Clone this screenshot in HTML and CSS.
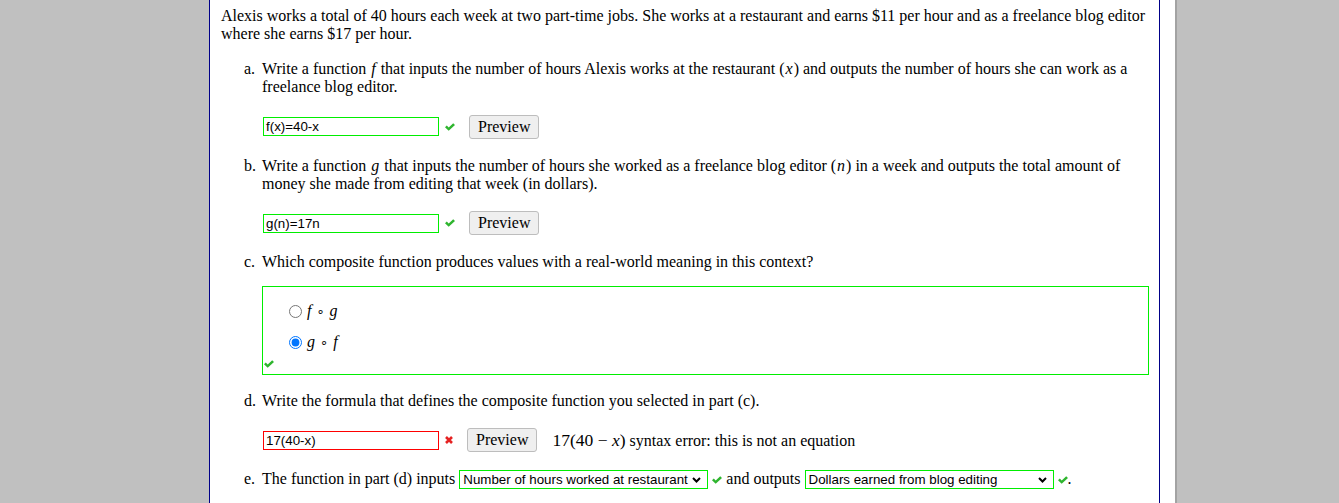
FILE: index.html
```html
<!DOCTYPE html>
<html lang="en">
<head>
<meta charset="utf-8">
<title>Composite functions</title>
<link rel="stylesheet" href="styles.css">
</head>
<body>
<div class="page">
  <div class="content">
    <p class="intro">Alexis works a total of 40 hours each week at two part-time jobs. She works at a restaurant and earns $11 per hour and as a freelance blog editor where she earns $17 per hour.</p>

    <div class="item">
      <span class="label">a.</span>
      <div class="body">
        <p class="prompt">Write a function <i class="mv">f</i> that inputs the number of hours Alexis works at the restaurant (<i class="mv">x</i>) and outputs the number of hours she can work as a freelance blog editor.</p>
        <div class="answer">
          <span class="field ok">f(x)=40-x</span>
          <svg class="icon check" width="10" height="8" viewBox="0 0 10 8"><path d="M0 4.3 L1.8 2.6 L3.7 4.4 L8.2 0.2 L10 1.9 L3.7 7.8 Z" fill="#2fb52f"/></svg>
          <button class="preview" type="button">Preview</button>
        </div>
      </div>
    </div>

    <div class="item">
      <span class="label">b.</span>
      <div class="body">
        <p class="prompt">Write a function <i class="mv">g</i> that inputs the number of hours she worked as a freelance blog editor (<i class="mv">n</i>) in a week and outputs the total amount of money she made from editing that week (in dollars).</p>
        <div class="answer">
          <span class="field ok">g(n)=17n</span>
          <svg class="icon check" width="10" height="8" viewBox="0 0 10 8"><path d="M0 4.3 L1.8 2.6 L3.7 4.4 L8.2 0.2 L10 1.9 L3.7 7.8 Z" fill="#2fb52f"/></svg>
          <button class="preview" type="button">Preview</button>
        </div>
      </div>
    </div>

    <div class="item item-c">
      <span class="label">c.</span>
      <div class="body">
        <p class="prompt">Which composite function produces values with a real-world meaning in this context?</p>
        <div class="choices">
          <label class="choice"><input type="radio" name="comp"><span class="opt"><i class="mv">f</i> <span class="ring">∘</span> <i class="mv">g</i></span></label>
          <label class="choice"><input type="radio" name="comp" checked><span class="opt"><i class="mv">g</i> <span class="ring">∘</span> <i class="mv">f</i></span></label>
          <svg class="icon check boxcheck" width="10" height="8" viewBox="0 0 10 8"><path d="M0 4.3 L1.8 2.6 L3.7 4.4 L8.2 0.2 L10 1.9 L3.7 7.8 Z" fill="#2fb52f"/></svg>
        </div>
      </div>
    </div>

    <div class="item">
      <span class="label">d.</span>
      <div class="body">
        <p class="prompt">Write the formula that defines the composite function you selected in part (c).</p>
        <div class="answer">
          <span class="field bad">17(40-x)</span>
          <svg class="icon cross" width="8" height="8" viewBox="0 0 8 8"><path d="M1 1 L7 7 M7 1 L1 7" fill="none" stroke="#e52222" stroke-width="2.6"/></svg>
          <button class="preview" type="button">Preview</button>
          <span class="feedback"><span class="math">17(40 − <i>x</i>)</span> syntax error: this is not an equation</span>
        </div>
      </div>
    </div>

    <div class="item last">
      <span class="label">e.</span>
      <div class="body">
        <p class="prompt">The function in part (d) inputs <span class="select"><span>Number of hours worked at restaurant</span><svg width="9" height="6" viewBox="0 0 9 6"><path d="M1 1 L4.5 4.5 L8 1" fill="none" stroke="#000" stroke-width="2"/></svg></span> <svg class="icon check inl" width="10" height="8" viewBox="0 0 10 8"><path d="M0 4.3 L1.8 2.6 L3.7 4.4 L8.2 0.2 L10 1.9 L3.7 7.8 Z" fill="#2fb52f"/></svg> and outputs <span class="select"><span>Dollars earned from blog editing</span><svg width="9" height="6" viewBox="0 0 9 6"><path d="M1 1 L4.5 4.5 L8 1" fill="none" stroke="#000" stroke-width="2"/></svg></span> <svg class="icon check inl" width="10" height="8" viewBox="0 0 10 8"><path d="M0 4.3 L1.8 2.6 L3.7 4.4 L8.2 0.2 L10 1.9 L3.7 7.8 Z" fill="#2fb52f"/></svg>.</p>
      </div>
    </div>
  </div>
</div>
</body>
</html>
```

FILE: styles.css
```css
html, body {
  margin: 0;
  padding: 0;
}
body {
  background: #c0c0c0;
  font-family: "Liberation Serif", "Times New Roman", serif;
  font-size: 16px;
  line-height: 18.4px;
  color: #000;
}
.page {
  margin-left: 209px;
  width: 966px;
  min-height: 503px;
  background: #fff;
  border-right: 2px solid #a3a3a3;
  display: flex;
}
.content {
  box-sizing: border-box;
  width: 951px;
  border-left: 1px solid #000088;
  border-right: 1px solid #000088;
  padding: 7px 10px 0 11px;
}
.intro {
  margin: 0 0 16px 0;
}
.item {
  display: grid;
  grid-template-columns: 18px 1fr;
  margin-left: 23px;
  margin-bottom: 18px;
}
.item-c {
  margin-bottom: 17px;
}
.label {
  display: block;
}
.body {
  min-width: 0;
}
.prompt {
  margin: 0;
}
.mv {
  font-family: "Liberation Serif", "Times New Roman", serif;
  font-style: italic;
  padding: 0 1px;
}
.answer {
  display: flex;
  align-items: center;
  height: 24px;
  margin-top: 18px;
}
.field {
  box-sizing: border-box;
  width: 176px;
  height: 19px;
  border: 1px solid #00ee00;
  padding: 0 2px;
  font-family: "Liberation Sans", Arial, sans-serif;
  font-size: 13.33px;
  line-height: 17px;
  background: #fff;
  margin-left: 1px;
}
.field.bad {
  border-color: #ff0000;
}
.icon {
  display: block;
  flex: none;
}
.answer .icon {
  margin-left: 6px;
}
.preview {
  box-sizing: border-box;
  height: 24px;
  margin-left: 14px;
  padding: 0 8px;
  background: #efefef;
  border: 1px solid #bdbdbd;
  border-radius: 3px;
  font-family: "Liberation Serif", "Times New Roman", serif;
  font-size: 16px;
  color: #000;
}
.feedback {
  margin-left: 15px;
}
.math {
  font-family: "Liberation Serif", "Times New Roman", serif;
  font-size: 17.5px;
}
.choices {
  margin-top: 14px;
  border: 1px solid #00ee00;
  padding: 15px 0 5px 26px;
  display: flex;
  flex-direction: column;
  align-items: flex-start;
}
.choice {
  display: flex;
  align-items: center;
  height: 20px;
}
.choice + .choice {
  margin-top: 11px;
}
.choice input {
  margin: 0 4px 0 0;
  width: 13px;
  height: 13px;
}
.opt .ring {
  font-family: "DejaVu Sans", sans-serif;
  font-size: 13px;
}
.boxcheck {
  margin: 6px 0 0 -25px;
  height: 10px;
}
.select {
  box-sizing: border-box;
  display: inline-flex;
  align-items: center;
  justify-content: space-between;
  width: 249px;
  height: 19px;
  border: 1px solid #00ee00;
  padding: 0 6px 0 3px;
  font-family: "Liberation Sans", Arial, sans-serif;
  font-size: 13.33px;
  line-height: 17px;
  background: #fff;
  vertical-align: baseline;
}
.icon.inl {
  display: inline-block;
  vertical-align: 0;
}
```
